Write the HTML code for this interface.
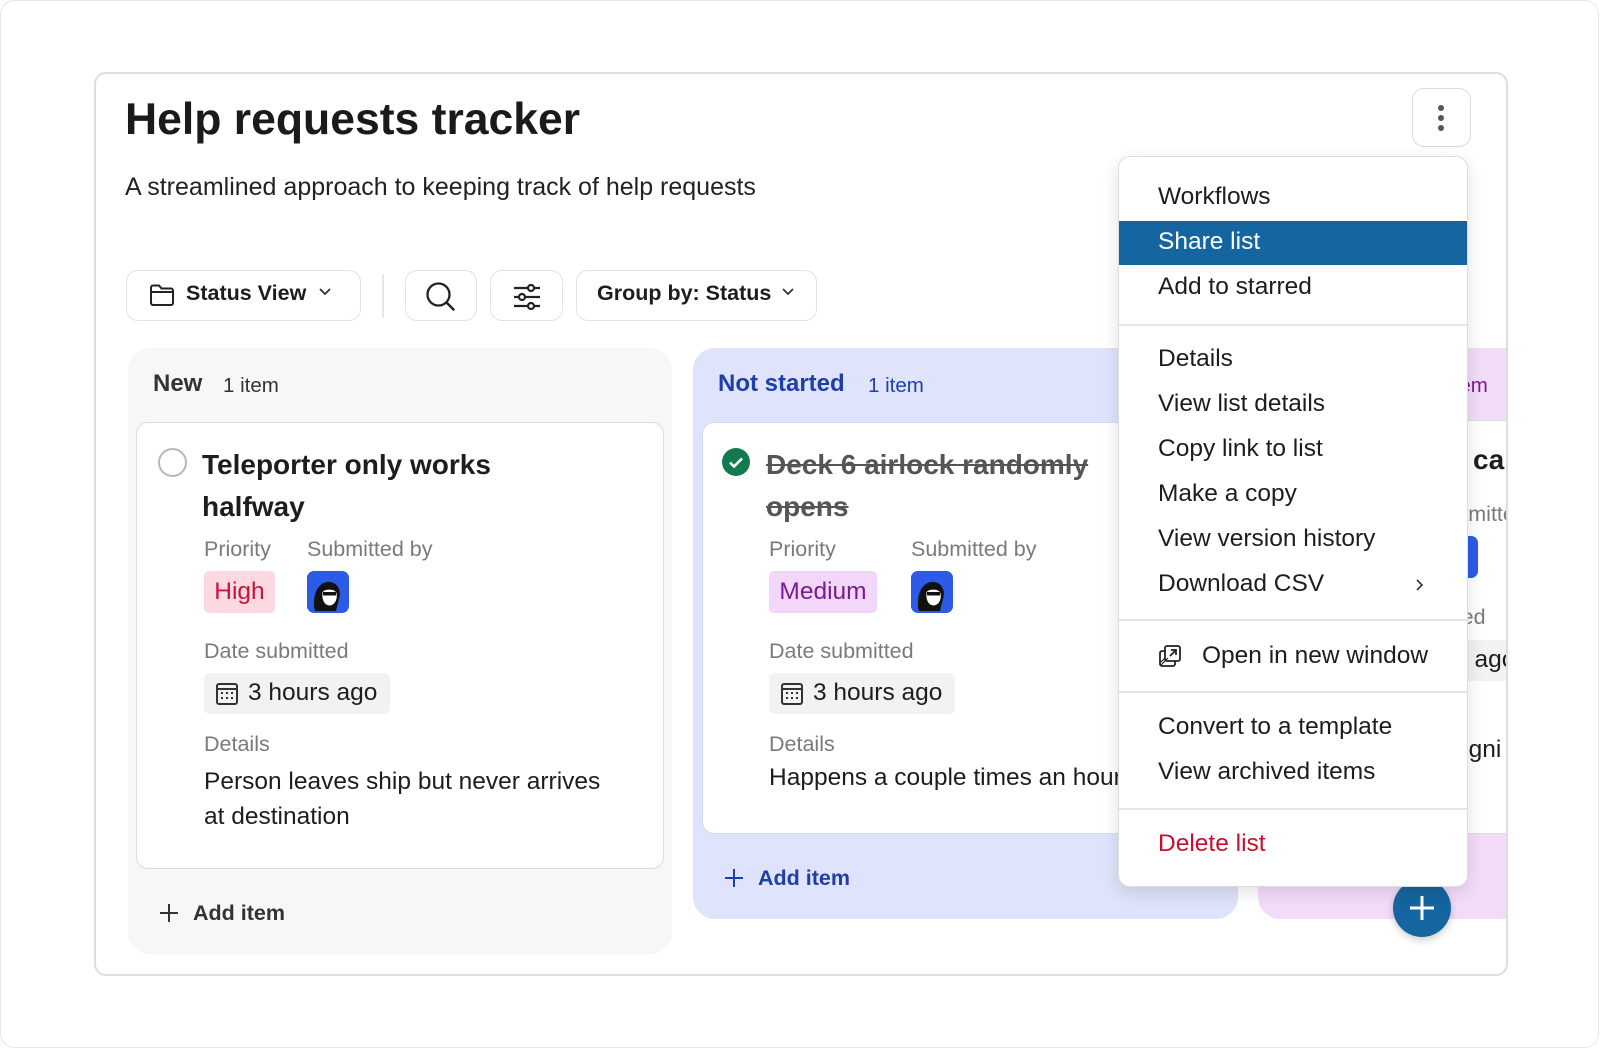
<!DOCTYPE html>
<html><head><meta charset="utf-8"><style>
*{box-sizing:border-box;margin:0;padding:0}
body{width:1600px;height:1049px;background:#fff;font-family:"Liberation Sans",sans-serif;color:#1d1d1d;position:relative;overflow:hidden}
.a{position:absolute;white-space:nowrap}
.page{position:absolute;left:0;top:0;width:1599px;height:1048px;border:1px solid #e8e8e8;border-radius:14px}
.cont{position:absolute;left:94px;top:72px;width:1414px;height:904px;border:2px solid #dedede;border-radius:12px;overflow:hidden;background:#fff}
.btn{position:absolute;top:196px;height:51px;border:1.5px solid #e2e2e2;border-radius:12px;background:#fff}
.col{position:absolute;border-radius:22px}
.card{position:absolute;background:#fff;border:1.5px solid #dcdcdc;border-radius:12px}
.lbl{font-size:21.5px;color:#7a7a7a}
.val{font-size:24.5px}
.menu{position:absolute;left:1118px;top:156px;width:350px;height:731px;background:#fff;border:1.5px solid #dedede;border-radius:12px;box-shadow:0 6px 18px rgba(0,0,0,.12);overflow:hidden}
.mi{position:absolute;left:39px;font-size:24.5px;color:#1d1d1d;white-space:nowrap;line-height:28px}
.sep{position:absolute;left:0;right:0;height:2px;background:#e6e6e6}
</style></head><body>
<div class="page"></div>
<div class="cont">
  <div class="a" style="left:29px;top:21px;font-size:44.5px;font-weight:bold;color:#1a1a1a">Help requests tracker</div>
  <div class="a" style="left:29px;top:99px;font-size:25px;color:#222">A streamlined approach to keeping track of help requests</div>

  <div class="btn" style="left:30px;width:235px"></div>
  <svg class="a" style="left:53px;top:209px" width="26" height="24" viewBox="0 0 26 24"><path d="M2 4.5a2 2 0 0 1 2-2h6l2.5 3H22a2 2 0 0 1 2 2V20a2 2 0 0 1-2 2H4a2 2 0 0 1-2-2z M2 9h22" fill="none" stroke="#222" stroke-width="2"/></svg>
  <div class="a" style="left:90px;top:207px;font-size:21.5px;font-weight:600">Status View</div>
  <svg class="a" style="left:222px;top:213px" width="14" height="10"><path d="M2 2l5 5 5-5" fill="none" stroke="#333" stroke-width="1.8"/></svg>
  <div class="a" style="left:286px;top:200px;width:2px;height:44px;background:#e6e6e6"></div>
  <div class="btn" style="left:309px;width:72px"></div>
  <svg class="a" style="left:328px;top:206px" width="34" height="34" viewBox="0 0 34 34"><circle cx="14.5" cy="14.5" r="11" fill="none" stroke="#222" stroke-width="2.3"/><path d="M22.5 22.5l7 7" stroke="#222" stroke-width="2.5" stroke-linecap="round"/></svg>
  <div class="btn" style="left:394px;width:73px"></div>
  <svg class="a" style="left:416px;top:208px" width="30" height="30" viewBox="0 0 30 30" fill="none" stroke="#222" stroke-width="2.2"><path d="M2 6h26M2 15h26M2 24h26"/><circle cx="19" cy="6" r="3" fill="#fff"/><circle cx="10" cy="15" r="3" fill="#fff"/><circle cx="19" cy="24" r="3" fill="#fff"/></svg>
  <div class="btn" style="left:480px;width:241px"></div>
  <div class="a" style="left:501px;top:207px;font-size:21.5px;font-weight:600">Group by: Status</div>
  <svg class="a" style="left:685px;top:213px" width="14" height="10"><path d="M2 2l5 5 5-5" fill="none" stroke="#333" stroke-width="1.8"/></svg>

  <!-- col 1 -->
  <div class="col" style="left:32px;top:274px;width:544px;height:606px;background:#f7f7f7"></div>
  <div class="a" style="left:57px;top:296px;font-size:24px;font-weight:600;color:#333">New</div>
  <div class="a" style="left:127px;top:300px;font-size:20.5px;color:#333">1 item</div>
  <div class="card" style="left:40px;top:348px;width:528px;height:447px"></div>
  <div class="a" style="left:62px;top:374px;width:29px;height:29px;border:2.5px solid #b8b8b8;border-radius:50%"></div>
  <div class="a" style="left:106px;top:370px;font-size:28px;font-weight:600;line-height:42px">Teleporter only works<br>halfway</div>
  <div class="a lbl" style="left:108px;top:463px">Priority</div>
  <div class="a lbl" style="left:211px;top:463px">Submitted by</div>
  <div class="a val" style="left:108px;top:497px;width:71px;height:42px;background:#fcd8e0;color:#c4143c;border-radius:5px;text-align:center;line-height:42px">High</div>
  <svg class="a" style="left:211px;top:497px" width="42" height="42" viewBox="0 0 42 42"><rect width="42" height="42" rx="7" fill="#2c5be8"/><path d="M8 40c-3-10 0-27 12-29 10-1 15 8 12 17l-3 12z" fill="#111"/><path d="M15 21c3-4 13-4 15 1 1 6-1 12-7 13-6 0-9-6-8-14z" fill="#fff" stroke="#111"/><rect x="16" y="21" width="13" height="3.5" fill="#111"/></svg>
  <div class="a lbl" style="left:108px;top:565px">Date submitted</div>
  <div class="a" style="left:108px;top:599px;width:186px;height:41px;background:#f2f2f2;border-radius:6px"></div>
  <svg class="a" style="left:119px;top:608px" width="24" height="24" viewBox="0 0 24 24" fill="none" stroke="#333" stroke-width="2"><rect x="2" y="2" width="20" height="20" rx="2"/><path d="M2 7h20"/><g fill="#333" stroke="none"><rect x="6" y="10" width="2" height="2"/><rect x="11" y="10" width="2" height="2"/><rect x="16" y="10" width="2" height="2"/><rect x="6" y="15" width="2" height="2"/><rect x="11" y="15" width="2" height="2"/><rect x="16" y="15" width="2" height="2"/></g></svg>
  <div class="a val" style="left:152px;top:605px">3 hours ago</div>
  <div class="a lbl" style="left:108px;top:658px">Details</div>
  <div class="a val" style="left:108px;top:690px;line-height:35px">Person leaves ship but never arrives<br>at destination</div>
  <svg class="a" style="left:63px;top:829px" width="20" height="20"><path d="M10 1v18M1 10h18" stroke="#333" stroke-width="2"/></svg>
  <div class="a" style="left:97px;top:827px;font-size:21.5px;font-weight:600;color:#333">Add item</div>

  <!-- col 2 -->
  <div class="col" style="left:597px;top:274px;width:545px;height:571px;background:#dfe3fb"></div>
  <div class="a" style="left:622px;top:296px;font-size:24px;font-weight:600;color:#1f3fa8">Not started</div>
  <div class="a" style="left:772px;top:300px;font-size:20.5px;color:#1f3fa8">1 item</div>
  <div class="card" style="left:606px;top:348px;width:528px;height:412px;border-color:#d4d9f2"></div>
  <svg class="a" style="left:625px;top:373px" width="30" height="30" viewBox="0 0 30 30"><circle cx="15" cy="15" r="14" fill="#127a4e"/><path d="M9 15.5l4 4 8-8" fill="none" stroke="#fff" stroke-width="2.6"/></svg>
  <div class="a" style="left:670px;top:370px;font-size:28px;font-weight:600;line-height:42px;color:#555;text-decoration:line-through">Deck 6 airlock randomly<br>opens</div>
  <div class="a lbl" style="left:673px;top:463px">Priority</div>
  <div class="a lbl" style="left:815px;top:463px">Submitted by</div>
  <div class="a val" style="left:673px;top:497px;width:108px;height:42px;background:#f2d7fb;color:#7a1c8f;border-radius:5px;text-align:center;line-height:42px">Medium</div>
  <svg class="a" style="left:815px;top:497px" width="42" height="42" viewBox="0 0 42 42"><rect width="42" height="42" rx="7" fill="#2c5be8"/><path d="M8 40c-3-10 0-27 12-29 10-1 15 8 12 17l-3 12z" fill="#111"/><path d="M15 21c3-4 13-4 15 1 1 6-1 12-7 13-6 0-9-6-8-14z" fill="#fff" stroke="#111"/><rect x="16" y="21" width="13" height="3.5" fill="#111"/></svg>
  <div class="a lbl" style="left:673px;top:565px">Date submitted</div>
  <div class="a" style="left:673px;top:599px;width:186px;height:41px;background:#f2f2f2;border-radius:6px"></div>
  <svg class="a" style="left:684px;top:608px" width="24" height="24" viewBox="0 0 24 24" fill="none" stroke="#333" stroke-width="2"><rect x="2" y="2" width="20" height="20" rx="2"/><path d="M2 7h20"/><g fill="#333" stroke="none"><rect x="6" y="10" width="2" height="2"/><rect x="11" y="10" width="2" height="2"/><rect x="16" y="10" width="2" height="2"/><rect x="6" y="15" width="2" height="2"/><rect x="11" y="15" width="2" height="2"/><rect x="16" y="15" width="2" height="2"/></g></svg>
  <div class="a val" style="left:717px;top:605px">3 hours ago</div>
  <div class="a lbl" style="left:673px;top:658px">Details</div>
  <div class="a val" style="left:673px;top:690px">Happens a couple times an hour</div>
  <svg class="a" style="left:628px;top:794px" width="20" height="20"><path d="M10 1v18M1 10h18" stroke="#1f3fa8" stroke-width="2"/></svg>
  <div class="a" style="left:662px;top:792px;font-size:21.5px;font-weight:600;color:#1f3fa8">Add item</div>

  <!-- col 3 -->
  <div class="col" style="left:1162px;top:274px;width:400px;height:571px;background:#f3dcfa"></div>
  <div class="a" style="left:1336px;top:300px;font-size:20.5px;color:#7a1c8f">1 item</div>
  <div class="card" style="left:1170px;top:346px;width:400px;height:414px"></div>
  <div class="a" style="left:1377px;top:370px;font-size:28px;font-weight:600">ca</div>
  <div class="a lbl" style="left:1334px;top:428px">Submitted by</div>
  <div class="a" style="left:1340px;top:462px;width:42px;height:42px;background:#2c5be8;border-radius:7px"></div>
  <div class="a lbl" style="left:1245px;top:531px">Date submitted</div>
  <div class="a" style="left:1280px;top:566px;width:186px;height:41px;background:#f2f2f2;border-radius:6px"></div>
  <div class="a val" style="left:1290px;top:572px">3 hours ago</div>
  <div class="a val" style="left:1280px;top:662px">Not recogni</div>
</div>

<!-- kebab -->
<div class="a" style="left:1412px;top:88px;width:59px;height:59px;border:1.5px solid #dcdcdc;border-radius:12px;background:#fff"></div>
<div class="a" style="left:1438px;top:105px;width:6px;height:6px;border-radius:50%;background:#555"></div>
<div class="a" style="left:1438px;top:115px;width:6px;height:6px;border-radius:50%;background:#555"></div>
<div class="a" style="left:1438px;top:125px;width:6px;height:6px;border-radius:50%;background:#555"></div>

<!-- FAB -->
<div class="a" style="left:1393px;top:879px;width:58px;height:58px;border-radius:50%;background:#1565a0;box-shadow:0 3px 8px rgba(0,0,0,.2)"></div>
<svg class="a" style="left:1409px;top:895px" width="26" height="26"><path d="M13 1v24M1 13h24" stroke="#fff" stroke-width="3"/></svg>

<div class="menu">
  <div class="mi" style="top:26px">Workflows</div>
  <div class="a" style="left:0;top:64px;width:350px;height:44px;background:#1565a0"></div>
  <div class="mi" style="top:71px;color:#fff">Share list</div>
  <div class="mi" style="top:116px">Add to starred</div>
  <div class="sep" style="top:167px"></div>
  <div class="mi" style="top:188px">Details</div>
  <div class="mi" style="top:233px">View list details</div>
  <div class="mi" style="top:278px">Copy link to list</div>
  <div class="mi" style="top:323px">Make a copy</div>
  <div class="mi" style="top:368px">View version history</div>
  <div class="mi" style="top:413px">Download CSV</div>
  <svg class="a" style="left:296px;top:421px" width="10" height="14"><path d="M2 2l5 5-5 5" fill="none" stroke="#333" stroke-width="1.6"/></svg>
  <div class="sep" style="top:462px"></div>
  <svg class="a" style="left:39px;top:487px" width="24" height="24" viewBox="0 0 24 24" fill="none" stroke="#222" stroke-width="1.8"><rect x="7" y="2" width="15" height="15" rx="2"/><path d="M7 7H4a2 2 0 0 0-2 2v11a2 2 0 0 0 2 2h11a2 2 0 0 0 2-2v-3"/><path d="M12 12l6-6M13 6h5v5"/><path d="M3 18l4-4M3 21l7-7" stroke-width="1.2"/></svg>
  <div class="mi" style="top:485px;left:83px">Open in new window</div>
  <div class="sep" style="top:534px"></div>
  <div class="mi" style="top:556px">Convert to a template</div>
  <div class="mi" style="top:601px">View archived items</div>
  <div class="sep" style="top:651px"></div>
  <div class="mi" style="top:673px;color:#c8102e">Delete list</div>
</div>
</body></html>
